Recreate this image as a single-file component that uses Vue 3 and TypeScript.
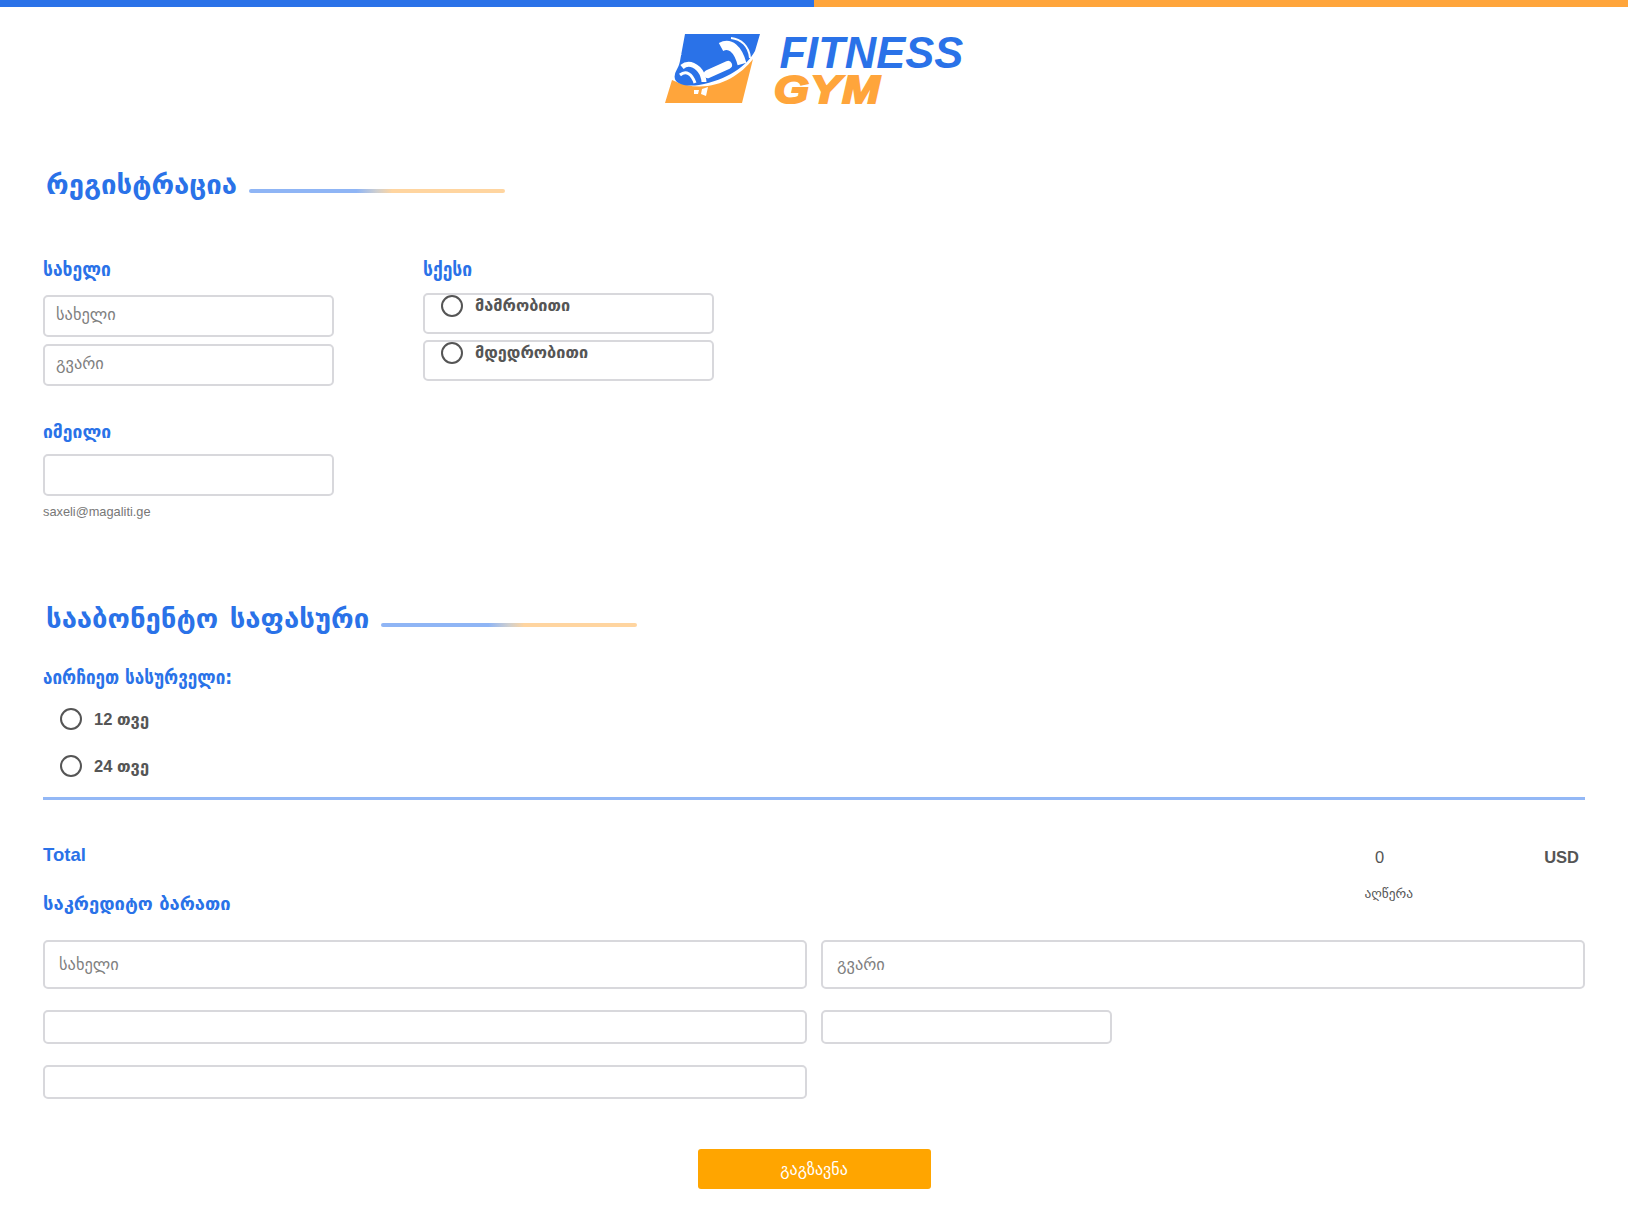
<script setup lang="ts">
const plans: string[] = ['12 თვე', '24 თვე']
const genders: string[] = ['მამრობითი', 'მდედრობითი']
</script>

<template>
  <div class="page">
    <div class="topbar"></div>
    <header class="brand">
      <svg class="mark" viewBox="0 0 96 70" width="96" height="70" aria-label="logo">
        <path fill="#ffa53b" d="M7,46 L0,69 L77,69 L88,25 C72,46 40,62 7,46 Z" />
        <path fill="#2a72e8" d="M20,0 L95,0 L90,17 C82,32 62,46 34,51 C20,53 7,50 10,40 C11,36 14,33 15,27 Z" />
        <path fill="none" stroke="#fff" stroke-width="1.6" d="M9,27 C11,24 13,23 16,20" />
        <path fill="none" stroke="#fff" stroke-width="8" stroke-linecap="round" d="M43,40 L63,31" />
        <path fill="none" stroke="#fff" stroke-width="9" d="M56,13 C65,8 73,15 77,30" />
        <path fill="none" stroke="#fff" stroke-width="2" d="M66,4 C76,5 84,12 85,24" />
        <path fill="none" stroke="#fff" stroke-width="5" d="M17,33 C24,27 33,32 37,40 C38,43 39,45 39,48" />
        <path fill="none" stroke="#fff" stroke-width="3" d="M15,41 C21,36 27,40 30,49" />
        <path fill="#fff" d="M29,56 L34,56 L33,60 L29,60 Z M37,55 L43,53 L41,62 L36,60 Z" />
      </svg>
      <div class="wordmark">
        <span class="fitness">FITNESS</span>
        <span class="gym">GYM</span>
      </div>
    </header>

    <form class="form" @submit.prevent>
      <div class="heading first">
        <h2>რეგისტრაცია</h2>
        <span class="rule"></span>
      </div>

      <div class="columns">
        <div class="col">
          <label class="label">სახელი</label>
          <input class="field" type="text" placeholder="სახელი" />
          <input class="field" type="text" placeholder="გვარი" />
          <label class="label email-label">იმეილი</label>
          <input class="field email" type="email" />
          <p class="hint">saxeli@magaliti.ge</p>
        </div>
        <div class="col">
          <label class="label">სქესი</label>
          <label v-for="g in genders" :key="g" class="gender">
            <input class="radio" type="radio" name="gender" />
            <span class="gender-text">{{ g }}</span>
          </label>
        </div>
      </div>

      <div class="heading second">
        <h2>სააბონენტო საფასური</h2>
        <span class="rule"></span>
      </div>

      <label class="label choose">აირჩიეთ სასურველი:</label>
      <label v-for="p in plans" :key="p" class="plan">
        <input class="radio" type="radio" name="plan" />
        <span>{{ p }}</span>
      </label>

      <div class="divider"></div>

      <div class="total">
        <span class="total-label">Total</span>
        <div class="amount">
          <span class="zero">0</span>
          <span class="usd">USD</span>
        </div>
      </div>

      <div class="card-head">
        <span class="card-title">საკრედიტო ბარათი</span>
        <span class="desc">აღწერა</span>
      </div>

      <div class="grid">
        <input class="field big" type="text" placeholder="სახელი" />
        <input class="field big" type="text" placeholder="გვარი" />
        <input class="field small" type="text" />
        <input class="field small half" type="text" />
        <input class="field small" type="text" />
      </div>

      <div class="actions">
        <button class="submit" type="submit">გაგზავნა</button>
      </div>
    </form>
  </div>
</template>

<style>
html, body { margin: 0; background: #fff; }
</style>

<style scoped>
.page { width: 1628px; height: 1214px; overflow: hidden; background: #fff; font-family: "Liberation Sans", "DejaVu Sans", sans-serif; color: #555; }
.topbar { height: 7px; background: linear-gradient(90deg, #2a72e8 0 50%, #ffa53b 50% 100%); }
.brand { display: flex; justify-content: center; align-items: flex-start; height: 105px; padding-top: 27px; padding-left: 1px; box-sizing: border-box; }
.mark { display: block; flex: none; }
.wordmark { display: flex; flex-direction: column; gap: 5px; margin-left: 12px; width: 192px; }
.fitness { font-size: 43.5px; line-height: 32px; font-weight: 700; font-style: italic; color: #2a72e8; margin-left: 7px; margin-top: 3px; }
.gym { align-self: flex-start; font-size: 39px; line-height: 32px; font-weight: 700; font-style: italic; color: #ffa53b; letter-spacing: 1.5px; -webkit-text-stroke: 2.2px #ffa53b; transform: scaleX(1.15); transform-origin: left center; margin-left: 1px; }
.form { padding: 0 43px; }
.heading { display: flex; align-items: center; padding-left: 3px; }
.heading h2 { margin: 0; font-family: "DejaVu Sans", sans-serif; font-size: 27.5px; line-height: 34px; padding-bottom: 2px; font-weight: 700; color: #2a72e8; }
.heading.second h2 { word-spacing: 2px; }
.rule { width: 256px; height: 4px; margin-left: 12px; margin-top: 12px; background: linear-gradient(90deg, #8fb5f5 0 42%, #cfcfcf 50%, #ffd5a0 56% 100%); border-radius: 2px; }
.heading.first { margin-top: 55px; }
.heading.second { margin-top: 81px; }
.columns { display: grid; grid-template-columns: 291px 291px; column-gap: 89px; margin-top: 54px; }
.col { display: flex; flex-direction: column; align-items: stretch; }
.label { font-family: "DejaVu Sans Condensed", "DejaVu Sans", sans-serif; font-size: 19.4px; line-height: 26px; font-weight: 700; color: #2a72e8; display: block; }
.field { display: block; box-sizing: border-box; width: 100%; height: 42px; margin: 0; padding: 0 11px 4px; border: 2px solid #d8d8dc; border-radius: 5px; background: #fff; outline: none; font-family: "DejaVu Sans", sans-serif; font-size: 16.4px; color: #555; }
.field::placeholder { color: #808080; opacity: 1; }
.col > .field { margin-top: 7px; }
.col > .label + .field { margin-top: 12px; }
.col > .email-label { margin-top: 33px; font-family: "DejaVu Sans", sans-serif; font-size: 17.5px; }
.col > .email-label + .email { margin-top: 9px; }
.hint { margin: 8px 0 0; font-size: 12.8px; line-height: 16px; color: #777; }
.gender { display: flex; align-items: flex-start; gap: 12px; box-sizing: border-box; height: 41px; margin-top: 6px; padding-left: 16px; border: 2px solid #d8d8dc; border-radius: 5px; font-family: "DejaVu Sans", sans-serif; font-size: 16.3px; line-height: 20px; font-weight: 700; color: #555; }
.gender-text { padding-top: 1px; }
.col > .label + .gender { margin-top: 10px; }
.radio { appearance: none; -webkit-appearance: none; box-sizing: border-box; flex: none; width: 22px; height: 22px; margin: 0; border: 2px solid #555; border-radius: 50%; background: #fff; }
.choose { margin-top: 27px; font-size: 19px; }
.plan { display: flex; align-items: center; gap: 12px; height: 22px; margin-top: 25px; padding-left: 17px; font-family: "Liberation Sans", "DejaVu Sans", sans-serif; font-size: 16.5px; font-weight: 700; color: #555; }
.choose + .plan { margin-top: 18px; }
.divider { height: 3px; margin-top: 20px; background: #93b8f6; }
.total { display: flex; justify-content: space-between; align-items: center; margin-top: 44px; height: 22px; }
.total-label { font-size: 18.5px; font-weight: 700; color: #2a72e8; }
.amount { display: flex; align-items: center; padding: 4px 6px 0 0; font-size: 16.5px; }
.zero { margin-right: 160px; }
.usd { font-weight: 700; }
.card-head { display: flex; justify-content: space-between; align-items: flex-start; margin-top: 17px; height: 57px; }
.card-title { margin-top: 10px; font-family: "DejaVu Sans", sans-serif; font-size: 18.4px; line-height: 22px; font-weight: 700; color: #2a72e8; }
.desc { margin-top: 3px; font-family: "DejaVu Sans", sans-serif; font-size: 13.4px; line-height: 16px; color: #555; margin-right: 172px; }
.grid { display: grid; grid-template-columns: 764px 764px; column-gap: 14px; row-gap: 21px; }
.big { height: 49px; padding: 0 14px; font-size: 16.4px; }
.small { height: 34px; }
.half { width: 291px; }
.actions { display: flex; justify-content: center; margin-top: 50px; }
.submit { width: 233px; height: 40px; border: 0; border-radius: 3px; background: #ffa500; color: #fff; font-family: "DejaVu Sans", sans-serif; font-size: 16px; }
</style>
